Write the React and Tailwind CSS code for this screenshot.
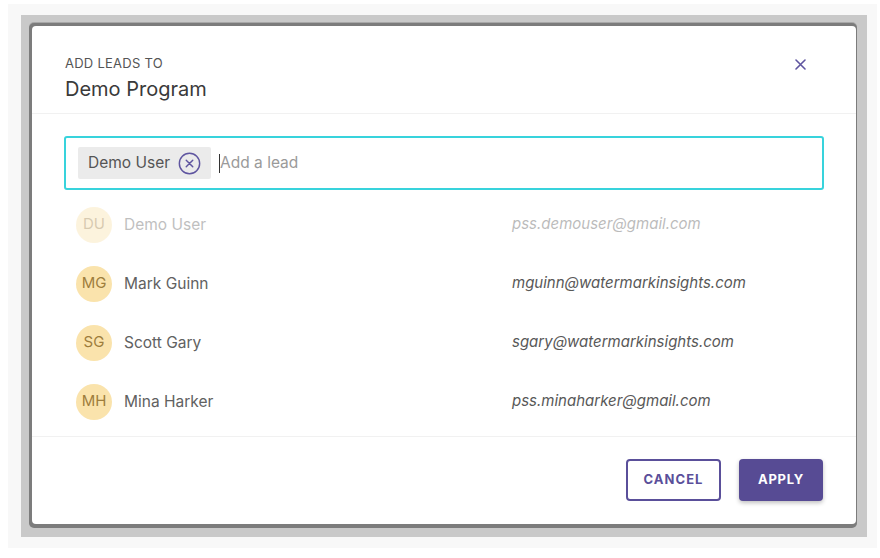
import React, { useState } from 'react';

const leads = [
  { initials: 'DU', name: 'Demo User', email: 'pss.demouser@gmail.com', picked: true },
  { initials: 'MG', name: 'Mark Guinn', email: 'mguinn@watermarkinsights.com' },
  { initials: 'SG', name: 'Scott Gary', email: 'sgary@watermarkinsights.com' },
  { initials: 'MH', name: 'Mina Harker', email: 'pss.minaharker@gmail.com' },
];

function CloseIcon() {
  return (
    <svg width="11" height="11" viewBox="0 0 11 11" fill="none" stroke="#5f55a0" strokeWidth="1.6" strokeLinecap="round">
      <path d="M1 1l9 9M10 1l-9 9" />
    </svg>
  );
}

function ChipRemove() {
  return (
    <svg width="23" height="23" viewBox="0 0 24 24" fill="none" stroke="#5f55a0" strokeWidth="1.5" strokeLinecap="round">
      <circle cx="12" cy="12" r="10.6" />
      <path d="M8.6 8.6l6.8 6.8M15.4 8.6l-6.8 6.8" />
    </svg>
  );
}

function LeadRow({ lead }) {
  return (
    <div className={`flex items-center h-[59px] ${lead.picked ? 'opacity-40' : ''}`}>
      <div className="w-[36px] h-[36px] ml-[12px] rounded-full bg-[#fae3ac] flex items-center justify-center text-[15px] text-[#9e7d3c]">
        {lead.initials}
      </div>
      <div className="ml-[12px] w-[388px] text-[15.5px] text-[#616161]">{lead.name}</div>
      <div className="text-[15px] italic text-[#585858]">{lead.email}</div>
    </div>
  );
}

export default function App() {
  const [selected, setSelected] = useState(['Demo User']);

  return (
    <div className="w-full h-[558px] bg-white pt-[4px] pl-[8px]" style={{ fontFamily: 'Inter, "Noto Sans", sans-serif' }}>
      <div className="w-[869px] h-[544px] bg-[#f8f8f8] pt-[11px] pl-[13px]">
        <div className="w-[846px] h-[522px] bg-[#c9c9c9] pl-[8px] pt-[8px]">
          <div className="w-[828px] h-[505px] bg-[#7c7c7c] rounded-[5px] pl-[3px] pt-[3px] pr-[1px] pb-[4px] shadow-[0_-1px_0_#a8a8a8]">
            <div className="w-[824px] h-[498px] bg-white rounded-[4px] flex flex-col">
              <div className="flex justify-between border-b border-[#f1f1f1] pl-[33px] pr-[50px] pt-[29px] pb-[12px]">
                <div>
                  <div className="text-[13px] leading-[16px] text-[#555] tracking-[0.02em]">ADD LEADS TO</div>
                  <div className="mt-[6px] text-[20px] leading-[24px] text-[#3a3a3a]">Demo Program</div>
                </div>
                <button className="mt-[4px] h-[11px]">
                  <CloseIcon />
                </button>
              </div>

              <div className="px-[32px] pt-[22px]">
                <div className="h-[54px] border-2 border-[#38d3dc] rounded-[3px] flex items-center pl-[12px]">
                  {selected.map((s) => (
                    <div key={s} className="h-[32px] bg-[#ebebeb] rounded-[2px] flex items-center pl-[10px] pr-[10px]">
                      <span className="text-[15.5px] text-[#555]">{s}</span>
                      <button className="ml-[8px] flex" onClick={() => setSelected([])}>
                        <ChipRemove />
                      </button>
                    </div>
                  ))}
                  <span className="ml-[8px] w-px h-[19px] bg-[#333]" />
                  <input
                    className="flex-1 outline-none text-[15.5px] text-[#333] placeholder:text-[#9a9a9a]"
                    placeholder="Add a lead"
                  />
                </div>
                <div className="pt-[5px] pb-[5px]">
                  {leads.map((l) => (
                    <LeadRow key={l.initials} lead={l} />
                  ))}
                </div>
              </div>

              <div className="border-t border-[#f1f1f1] flex justify-end gap-[18px] pr-[33px] pt-[22px]">
                <button className="w-[95px] h-[42px] border-2 border-[#5a4f9a] rounded-[4px] text-[13px] font-bold tracking-[0.08em] text-[#5a4f9a]">
                  CANCEL
                </button>
                <button className="w-[84px] h-[42px] bg-[#574b94] rounded-[4px] text-[13px] font-bold tracking-[0.06em] text-white shadow-[0_2px_4px_rgba(0,0,0,0.25)]">
                  APPLY
                </button>
              </div>
            </div>
          </div>
        </div>
      </div>
    </div>
  );
}
